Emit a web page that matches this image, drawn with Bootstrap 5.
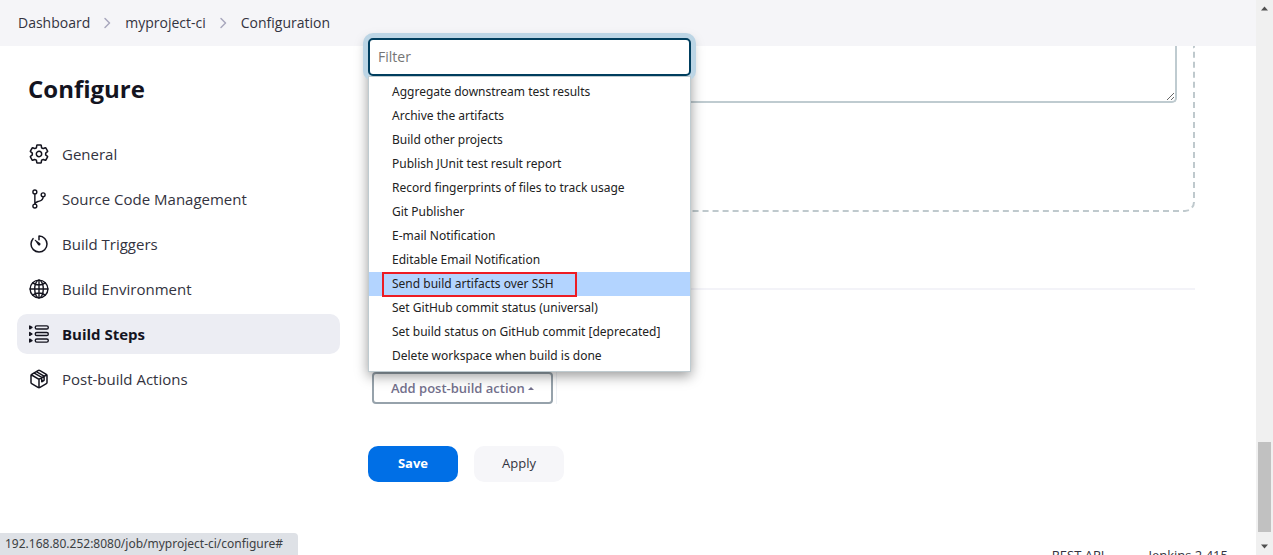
<!DOCTYPE html>
<html lang="en">
<head>
<meta charset="utf-8">
<meta name="viewport" content="width=device-width, initial-scale=1">
<title>myproject-ci Config [Jenkins]</title>
<link href="https://cdn.jsdelivr.net/npm/bootstrap@5.3.0/dist/css/bootstrap.min.css" rel="stylesheet">
<style>
body { font-family: "Open Sans", sans-serif; font-size: 14px; color: #14141f; }
.topbar { height: 46px; background: #f5f5f8; padding-left: 18px; }
.topbar .breadcrumb-item { display: flex; align-items: center; line-height: 20px; }
.topbar .breadcrumb-item + .breadcrumb-item { padding-left: 0; }
.topbar .breadcrumb-item + .breadcrumb-item::before { display: none; }
.topbar a { color: #333340; }
.chev { width: 8px; height: 12px; margin: 0 14px 0 13px; }
.side { width: 368px; padding: 26px 28px 0 17px; }
.side h1 { font-size: 24px; line-height: 34px; margin: 0 0 28px 11px; }
.side .nav { gap: 5px; }
.side .nav-link { height: 40px; padding: 0 12px; gap: 13px; border-radius: 10px; color: #333340; font-size: 15px; }
.side .nav-link.active { background: #ecedf3; color: #14141f; font-weight: 700; }
.side svg { width: 20px; height: 20px; fill: none; stroke: #14141f; stroke-width: 36; stroke-linecap: round; stroke-linejoin: round; }
.content { padding-right: 61px; }
.step { height: 166px; border: 2px dashed #bfc9cd; border-top: 0; border-radius: 0 0 10px 10px; padding: 0 16px; }
.step textarea { height: 57px; border: 2px solid #bfcbd0; border-top: 0; border-radius: 0 0 5px 5px; resize: vertical; }
.rule { height: 2px; margin: 76px 0 82px; background: #f3f3f8; border: 0; opacity: 1; }
.adder { padding: 0 3px 0 4px; border-right: 1px solid #eef1f5; }
.adder-btn { height: 32px; width: 181px; padding: 0; font-size: 13px; font-weight: 600; line-height: 26px; color: #73708c; border: 2px solid #96a2ab; border-radius: 4px; background: #fff; }
.adder-btn::after { border-width: 0 4px 4px; }
.chooser { bottom: 100%; left: 0; width: 323px; z-index: 5; box-shadow: 0 4px 12px rgba(0,0,0,.4); background: #fff; font-family: "Noto Sans", sans-serif; }
.chooser input { height: 38px; padding: 0 8px 2px; font-size: 14px; border: 2px solid #003e5e; border-radius: 5px; box-shadow: 0 0 0 5px #bcd5e5; position: relative; font-family: "Open Sans", sans-serif; color: #14141f; }
.chooser input:focus { border-color: #003e5e; box-shadow: 0 0 0 5px #bcd5e5; }
.chooser input::placeholder { color: #757575; }
.choices { border: 1px solid #bfcbd0; padding: 3px 0; position: relative; background: #fff; }
.choices button { height: 24px; padding: 0 23px; font-size: 12px; line-height: 24px; color: #222; border: 0; background: none; text-align: left; }
.choices .picked { background: #b3d4ff; }
.marked { display: block; width: 195px; height: 25px; margin-left: -10px; padding-left: 8px; line-height: 20px; border: 2px solid #ed1c24; position: relative; }
.actions { margin-top: 42px; gap: 16px; }
.actions .btn { width: 90px; height: 36px; padding: 0; border-radius: 10px; font-size: 13px; border: 0; }
.btn-save { background: #006fe6; color: #fff; font-weight: 700; }
.btn-plain { background: #f6f6f9; color: #333340; }
.foot { margin-top: 63px; padding-right: 28px; gap: 44px; font-size: 13px; line-height: 20px; }
.foot a { color: #333340; }
.urlhint { padding: 0 15px 0 5px; background: #dee1e6; color: #3c4043; border-top-right-radius: 4px; font: 12px/22px "Noto Sans", sans-serif; z-index: 6; }
.track { width: 17px; background: #f0f0f0; }
.track .arrow { height: 17px; }
.track .thumb { width: 13px; height: 90px; margin-bottom: 6px; background: #c1c1c1; }
</style>
</head>
<body class="overflow-hidden">
<div class="vh-100 d-flex overflow-hidden">
  <div class="flex-grow-1 d-flex flex-column">
    <nav class="topbar d-flex align-items-center flex-shrink-0" aria-label="breadcrumb">
      <ol class="breadcrumb mb-0">
        <li class="breadcrumb-item"><a class="text-decoration-none" href="#">Dashboard</a></li>
        <li class="breadcrumb-item"><svg class="chev" viewBox="0 0 8 12" fill="none" stroke="#a9a8bd" stroke-width="1.500" stroke-linecap="round" stroke-linejoin="round"><path d="M2 1.500l4.500 4.500L2 10.500"/></svg><a class="text-decoration-none" href="#">myproject-ci</a></li>
        <li class="breadcrumb-item"><svg class="chev" viewBox="0 0 8 12" fill="none" stroke="#a9a8bd" stroke-width="1.500" stroke-linecap="round" stroke-linejoin="round"><path d="M2 1.500l4.500 4.500L2 10.500"/></svg><a class="text-decoration-none" href="#">Configuration</a></li>
      </ol>
    </nav>
    <div class="d-flex flex-grow-1">
      <aside class="side flex-shrink-0">
        <h1 class="fw-bold">Configure</h1>
        <nav class="nav flex-column">
          <a class="nav-link d-flex align-items-center" href="#"><svg viewBox="16 16 480 480"><path d="M262.290 192.310a64 64 0 1057.400 57.400 64.130 64.130 0 00-57.400-57.400zM416.390 256a154.340 154.340 0 01-1.530 20.790l45.210 35.460a10.810 10.810 0 012.450 13.750l-42.770 74a10.810 10.810 0 01-13.140 4.590l-44.900-18.080a16.110 16.110 0 00-15.170 1.750A164.480 164.480 0 01325 400.800a15.940 15.940 0 00-8.820 12.140l-6.730 47.890a11.080 11.080 0 01-10.680 9.170h-85.540a11.110 11.110 0 01-10.690-8.870l-6.720-47.820a16.070 16.070 0 00-9-12.220 155.300 155.300 0 01-21.460-12.570 16 16 0 00-15.110-1.710l-44.890 18.070a10.810 10.810 0 01-13.140-4.580l-42.770-74a10.800 10.800 0 012.450-13.750l38.210-30a16.050 16.050 0 006-14.080c-.36-4.170-.58-8.330-.58-12.500s.21-8.270.58-12.350a16 16 0 00-6.070-13.940l-38.190-30A10.810 10.810 0 0149.480 186l42.770-74a10.810 10.810 0 0113.140-4.590l44.900 18.080a16.110 16.110 0 0015.170-1.750A164.480 164.480 0 01187 111.200a15.940 15.940 0 008.820-12.140l6.730-47.890A11.080 11.080 0 01213.230 42h85.540a11.110 11.110 0 0110.690 8.870l6.720 47.820a16.070 16.070 0 009 12.220 155.300 155.300 0 0121.460 12.570 16 16 0 0015.110 1.710l44.890-18.070a10.810 10.810 0 0113.140 4.580l42.770 74a10.800 10.800 0 01-2.450 13.750l-38.210 30a16.050 16.050 0 00-6.050 14.080c.33 4.140.55 8.300.55 12.470z"/></svg>General</a>
          <a class="nav-link d-flex align-items-center" href="#"><svg viewBox="0 0 512 512"><circle cx="150" cy="74" r="50"/><circle cx="150" cy="438" r="50"/><circle cx="362" cy="148" r="50"/><path d="M150 124v264M362 198c0 110-70 100-134 122-40 14-78 30-78 68"/></svg>Source Code Management</a>
          <a class="nav-link d-flex align-items-center" href="#"><svg viewBox="16 16 480 480"><path d="M112.910 128A191.850 191.850 0 0064 254c-1.180 106.350 85.650 193.800 192 194 106.200.2 192-85.830 192-192 0-104.540-83.550-189.610-187.500-192a4.360 4.360 0 00-4.500 4.370V152"/><path fill="#14141f" stroke="none" d="M233.380 278.630l-79-113a8.130 8.130 0 0111.320-11.320l113 79a32.500 32.500 0 01-37.250 53.260 33.210 33.210 0 01-8.070-7.940z"/></svg>Build Triggers</a>
          <a class="nav-link d-flex align-items-center" href="#"><svg viewBox="0 0 512 512"><circle cx="256" cy="256" r="228"/><ellipse cx="256" cy="256" rx="110" ry="228"/><path d="M256 28v456M28 256h456M98 100c42 34 98 52 158 52s116-18 158-52M98 412c42-34 98-52 158-52s116 18 158 52"/></svg>Build Environment</a>
          <a class="nav-link active d-flex align-items-center" href="#" aria-current="page"><svg viewBox="0 0 512 512"><rect x="160" y="48" width="334" height="80" rx="40"/><rect x="160" y="216" width="334" height="80" rx="40"/><rect x="160" y="384" width="334" height="80" rx="40"/><path fill="#14141f" d="M18 52v72l58-36zM18 220v72l58-36zM18 388v72l58-36z"/></svg>Build Steps</a>
          <a class="nav-link d-flex align-items-center" href="#"><svg viewBox="16 16 480 480"><path d="M448 341.370V170.610A32 32 0 00432.110 143l-152-88.460a47.940 47.940 0 00-48.240 0L79.890 143A32 32 0 0064 170.610v170.760A32 32 0 0079.890 369l152 88.460a48 48 0 0048.240 0l152-88.460A32 32 0 00448 341.370zM69 153.990l187 110 187-110M256 463.990v-200M132 110l190 108v106l56-36V186L190 80"/></svg>Post-build Actions</a>
        </nav>
      </aside>
      <main class="content flex-grow-1">
        <div class="step"><textarea class="form-control" aria-label="Command"></textarea></div>
        <hr class="rule">
        <div class="d-flex">
          <div class="adder position-relative">
            <div class="chooser position-absolute">
              <input class="form-control" type="text" placeholder="Filter" aria-label="Filter">
              <div class="choices d-flex flex-column">
                <button type="button">Aggregate downstream test results</button>
                <button type="button">Archive the artifacts</button>
                <button type="button">Build other projects</button>
                <button type="button">Publish JUnit test result report</button>
                <button type="button">Record fingerprints of files to track usage</button>
                <button type="button">Git Publisher</button>
                <button type="button">E-mail Notification</button>
                <button type="button">Editable Email Notification</button>
                <button type="button" class="picked"><span class="marked">Send build artifacts over SSH</span></button>
                <button type="button">Set GitHub commit status (universal)</button>
                <button type="button">Set build status on GitHub commit [deprecated]</button>
                <button type="button">Delete workspace when build is done</button>
              </div>
            </div>
            <div class="dropup"><button type="button" class="adder-btn dropdown-toggle" aria-expanded="true">Add post-build action</button></div>
          </div>
        </div>
        <div class="actions d-flex">
          <button type="submit" class="btn btn-save">Save</button>
          <button type="button" class="btn btn-plain">Apply</button>
        </div>
      </main>
    </div>
    <footer class="foot d-flex justify-content-end">
      <a class="text-decoration-none" href="#">REST API</a>
      <a class="text-decoration-none" href="#">Jenkins 2.415</a>
    </footer>
  </div>
  <div class="track d-flex flex-column align-items-center flex-shrink-0" aria-hidden="true">
    <svg class="arrow flex-shrink-0" width="17" viewBox="0 0 17 17"><path d="M5 10.500l3.500-4 3.500 4z" fill="#505050"/></svg>
    <div class="flex-grow-1"></div>
    <div class="thumb"></div>
    <svg class="arrow flex-shrink-0" width="17" viewBox="0 0 17 17"><path d="M5 6.500l3.500 4 3.500-4z" fill="#505050"/></svg>
  </div>
</div>
<div class="urlhint position-fixed bottom-0 start-0">192.168.80.252:8080/job/myproject-ci/configure#</div>
<script src="https://cdn.jsdelivr.net/npm/bootstrap@5.3.0/dist/js/bootstrap.bundle.min.js"></script>
</body>
</html>
